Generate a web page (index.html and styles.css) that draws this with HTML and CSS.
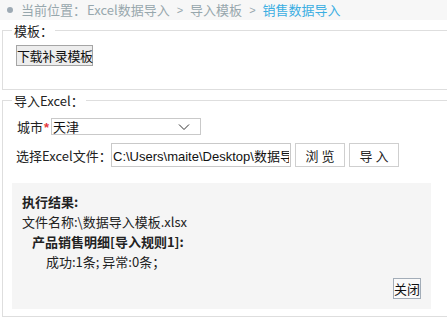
FILE: index.html
```html
<!DOCTYPE html>
<html lang="zh-CN">
<head>
    <meta charset="UTF-8">
    <meta name="viewport" content="width=device-width, initial-scale=1.0">
    <title>销售数据导入</title>
    <link rel="stylesheet" href="styles.css">
</head>
<body>
    <div class="crumbs">
        <span class="dot"></span>
        <span class="crumb-label">当前位置：</span>
        <span>Excel数据导入</span>
        <span class="sep">&gt;</span>
        <span>导入模板</span>
        <span class="sep">&gt;</span>
        <span class="current">销售数据导入</span>
    </div>

    <fieldset class="box">
        <legend>模板：</legend>
        <div class="tpl-row">
            <button class="btn-sys" type="button">下载补录模板</button>
        </div>
    </fieldset>

    <fieldset class="box">
        <legend>导入Excel：</legend>
        <div class="form-row city-row">
            <label class="lbl">城市<span class="req">*</span></label>
            <div class="select">
                <span class="select-text">天津</span>
                <svg class="chev" width="12" height="8" viewBox="0 0 12 8">
                    <path d="M1 1.5 L6 6.5 L11 1.5" fill="none" stroke="#333" stroke-width="1"/>
                </svg>
            </div>
        </div>
        <div class="form-row file-row">
            <label class="lbl file-lbl">选择Excel文件：</label>
            <input class="file-path" type="text" value="C:\Users\maite\Desktop\数据导入模板.xlsx">
            <button class="btn-flat" type="button">浏 览</button>
            <button class="btn-flat" type="button">导 入</button>
        </div>

        <div class="result">
            <div class="res-line bold">执行结果:</div>
            <div class="res-line">文件名称:\数据导入模板.xlsx</div>
            <div class="res-line bold indent1">产品销售明细[导入规则1]:</div>
            <div class="res-line indent2">成功:1条; 异常:0条；</div>
            <div class="res-foot">
                <button class="btn-close" type="button">关闭</button>
            </div>
        </div>
    </fieldset>
</body>
</html>
```

FILE: styles.css
```css
html {
    overflow: hidden;
}
body {
    margin: 0;
    width: 470px;
    font-family: "Noto Sans CJK SC", "Liberation Sans", sans-serif;
    font-size: 13px;
    color: #222;
    background: #fff;
    white-space: nowrap;
}
.crumbs {
    height: 20px;
    line-height: 20px;
    background: #f7f7f7;
    padding-left: 7px;
    color: #97a7ad;
    display: flex;
    align-items: center;
    gap: 5px;
}
.dot {
    width: 6px;
    height: 6px;
    border-radius: 50%;
    background: #9eaab4;
    margin-right: 3px;
}
.crumb-label {
    margin-right: -4px;
}
.sep {
    font-family: "Liberation Sans", sans-serif;
    font-size: 11px;
    padding: 0 2px;
}
.current {
    color: #3aaee2;
}
.box {
    margin: 2px 0 0 2px;
    padding: 0 9px 7px 9px;
    border: 1px solid #dedede;
    border-right: none;
}
.box legend {
    padding: 0 2px;
    line-height: 17px;
    color: #222;
}
.tpl-row {
    padding: 6px 0 16px 4px;
    line-height: 0;
}
.btn-sys {
    font-family: "Noto Sans CJK SC", sans-serif;
    font-size: 13px;
    letter-spacing: -0.4px;
    height: 21px;
    width: 77px;
    padding: 0;
    border: 1px solid #a5a5a5;
    background: #ededed;
    color: #111;
    line-height: 19px;
    white-space: nowrap;
}
.form-row {
    display: flex;
    align-items: center;
}
.form-row > * {
    flex-shrink: 0;
}
.city-row {
    margin-top: 9px;
    height: 17px;
    padding-left: 5px;
}
.lbl {
    color: #222;
}
.req {
    color: #e4393c;
    font-family: "Liberation Sans", sans-serif;
    font-weight: bold;
    margin-left: 1px;
}
.select {
    position: relative;
    width: 148px;
    height: 15px;
    border: 1px solid #c9c9c9;
    margin-left: 2px;
    display: flex;
    align-items: center;
}
.select-text {
    padding-left: 1px;
    line-height: 15px;
    color: #111;
}
.chev {
    position: absolute;
    right: 10px;
    top: 4px;
}
.file-row {
    margin-top: 8px;
    height: 24px;
    padding-left: 4px;
}
.file-lbl {
    width: 95px;
}
.file-path {
    width: 180px;
    box-sizing: border-box;
    height: 24px;
    border: 1px solid #c9c9c9;
    padding: 0 1px;
    font-family: "Liberation Sans", sans-serif;
    font-size: 13px;
    color: #111;
    margin: 0;
}
.btn-flat {
    width: 50px;
    height: 24px;
    margin-left: 4px;
    padding: 0;
    border: 1px solid #cfcfcf;
    background: #fff;
    font-family: "Noto Sans CJK SC", sans-serif;
    font-size: 13px;
    color: #222;
}
.result {
    margin-top: 16px;
    width: 419px;
    height: 126px;
    box-sizing: border-box;
    background: #f5f5f5;
    padding: 9px 10px 0 10px;
}
.res-line {
    height: 20px;
    line-height: 20px;
    color: #222;
}
.bold {
    font-weight: bold;
}
.indent1 {
    padding-left: 10px;
}
.indent2 {
    padding-left: 24px;
}
.res-foot {
    display: flex;
    justify-content: flex-end;
    margin-top: 6px;
}
.btn-close {
    width: 28px;
    height: 21px;
    padding: 0;
    border: 1px solid #a3adb8;
    background: #fafafa;
    font-family: "Noto Sans CJK SC", sans-serif;
    font-size: 13px;
    color: #111;
    line-height: 19px;
    white-space: nowrap;
    overflow: hidden;
}
```
